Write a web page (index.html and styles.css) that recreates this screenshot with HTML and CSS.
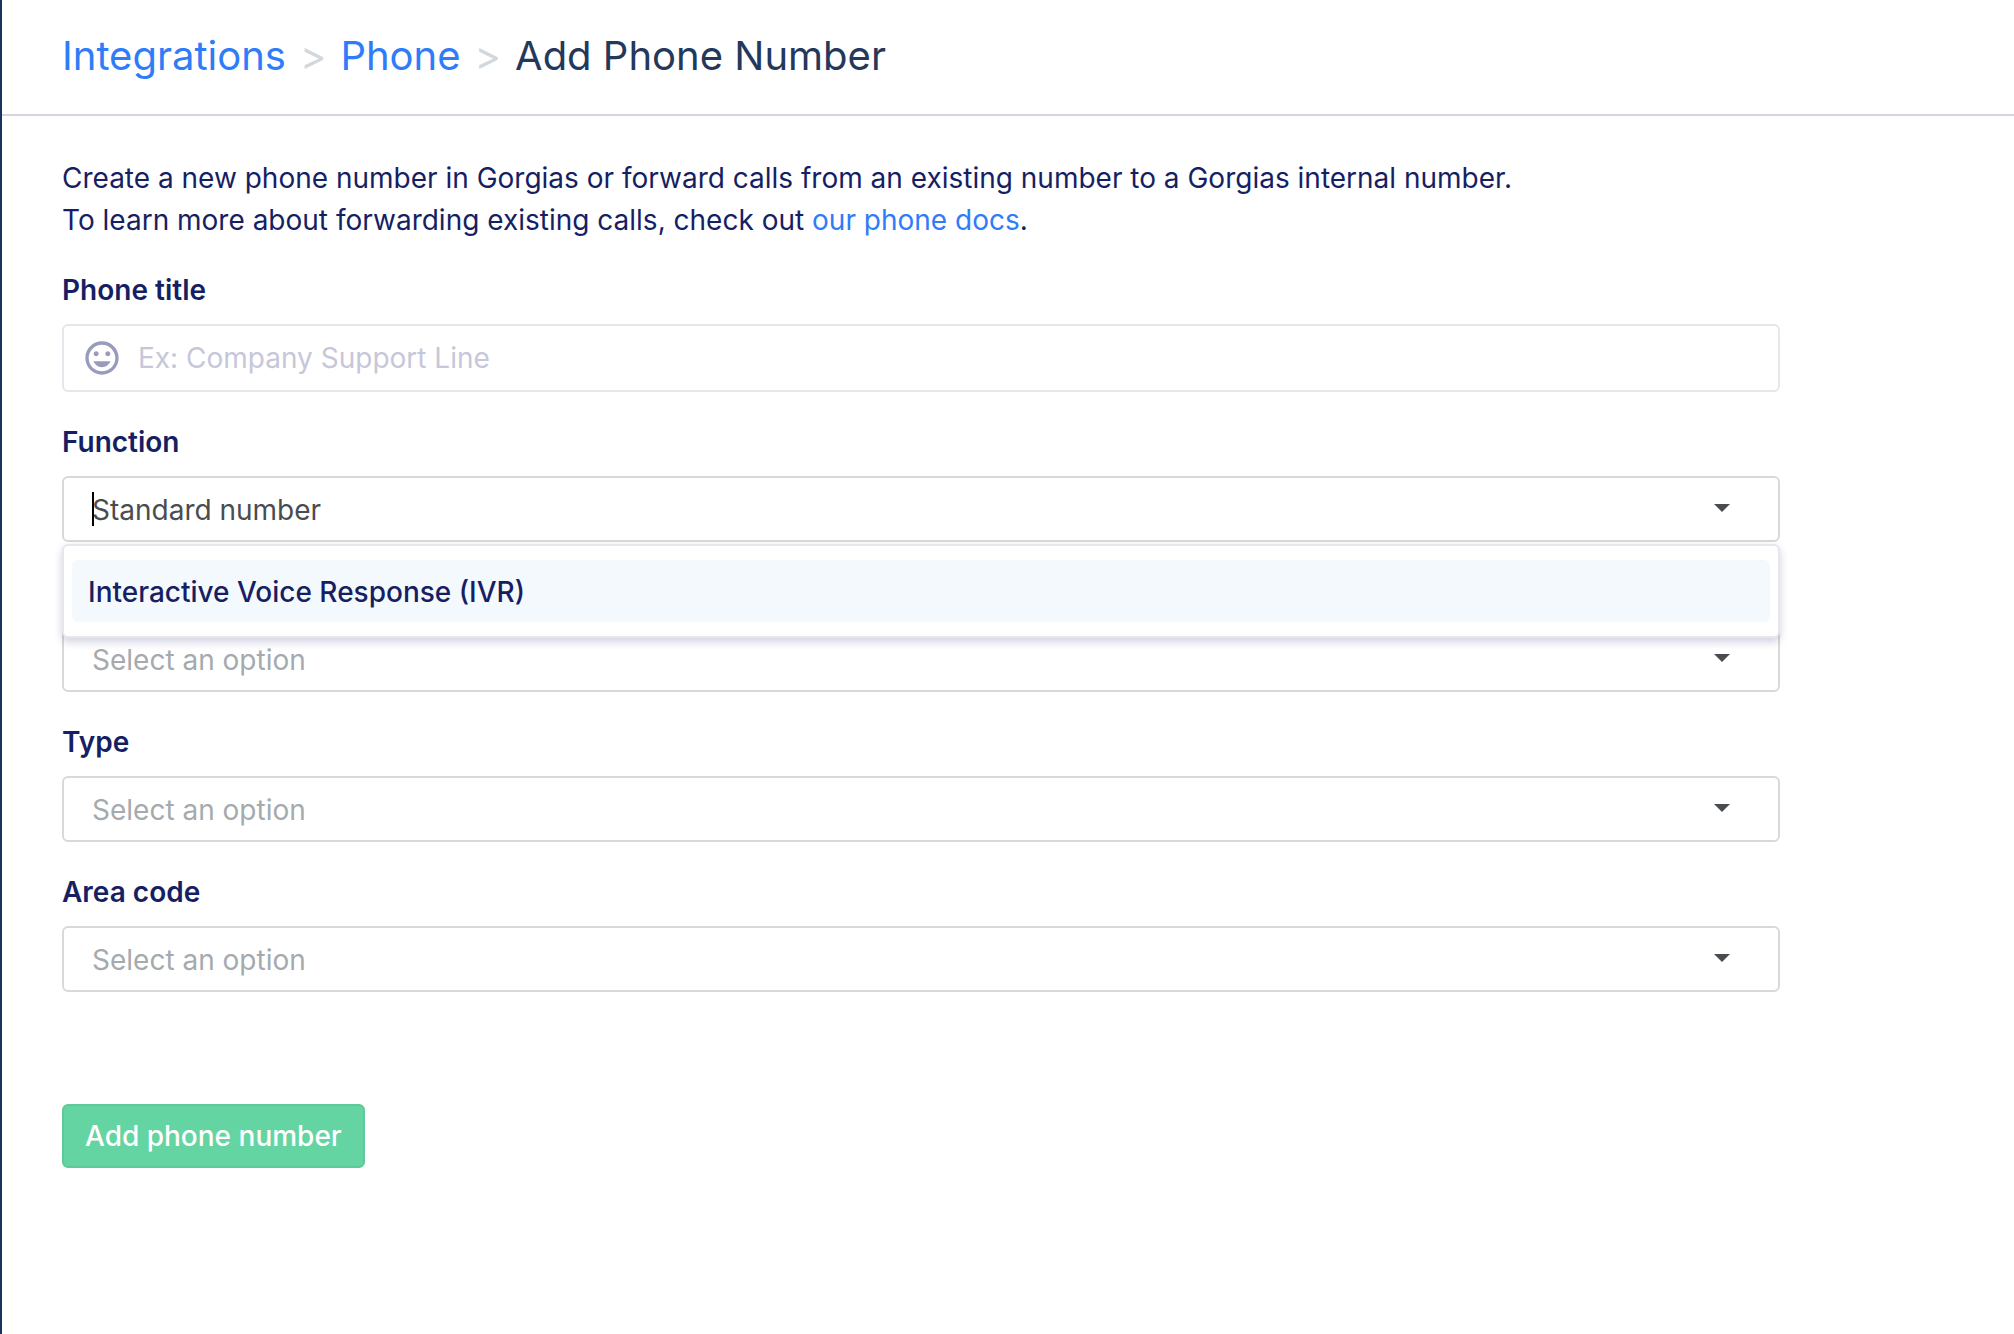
FILE: index.html
```html
<!DOCTYPE html>
<html lang="en">
  <head>
    <meta charset="UTF-8" />
    <meta name="viewport" content="width=device-width, initial-scale=1.0" />
    <title>Add Phone Number</title>
    <link rel="stylesheet" href="styles.css">
  </head>
  <body>
    <header class="page-header">
      <nav class="breadcrumb" aria-label="Breadcrumb">
        <a href="#">Integrations</a>
        <span class="separator">&gt;</span>
        <a href="#">Phone</a>
        <span class="separator">&gt;</span>
        <h1>Add Phone Number</h1>
      </nav>
    </header>

    <main class="container">
      <p>
        Create a new phone number in Gorgias or forward calls from an existing number to a Gorgias internal number.<br />
        To learn more about forwarding existing calls, check out <a href="#">our phone docs</a>.
      </p>

      <form>
        <div class="field">
          <label for="title">Phone title</label>
          <div class="input-group">
            <svg class="emoji" viewBox="0 0 24 24" aria-hidden="true">
              <path d="M11.99 2C6.47 2 2 6.48 2 12s4.47 10 9.99 10C17.52 22 22 17.52 22 12S17.52 2 11.99 2zM12 20c-4.42 0-8-3.58-8-8s3.58-8 8-8 8 3.58 8 8-3.58 8-8 8zm3.5-9c.83 0 1.5-.67 1.5-1.5S16.33 8 15.5 8 14 8.67 14 9.5s.67 1.5 1.5 1.5zm-7 0c.83 0 1.5-.67 1.5-1.5S9.33 8 8.5 8 7 8.67 7 9.5 7.67 11 8.5 11zm3.5 6.5c2.33 0 4.31-1.46 5.11-3.5H6.89c.8 2.04 2.78 3.5 5.11 3.5z" />
            </svg>
            <input type="text" id="title" placeholder="Ex: Company Support Line" />
          </div>
        </div>

        <div class="field">
          <label for="function">Function</label>
          <div class="select">
            <select id="function" class="selected">
              <option>Standard number</option>
              <option>Interactive Voice Response (IVR)</option>
            </select>
            <span class="caret"></span>
            <div class="menu">
              <button type="button" class="menu-item">Interactive Voice Response (IVR)</button>
            </div>
          </div>
        </div>

        <div class="field no-label">
          <div class="select">
            <select id="country" aria-label="Country">
              <option>Select an option</option>
            </select>
          </div>
        </div>

        <div class="field">
          <label for="type">Type</label>
          <div class="select">
            <select id="type">
              <option>Select an option</option>
            </select>
          </div>
        </div>

        <div class="field">
          <label for="area">Area code</label>
          <div class="select">
            <select id="area">
              <option>Select an option</option>
            </select>
          </div>
        </div>

        <button type="submit" class="submit">Add phone number</button>
      </form>
    </main>
  </body>
</html>
```
FILE: styles.css
```css
* {
  box-sizing: border-box;
}

body {
  margin: 0;
  min-height: 100vh;
  border-left: 2px solid #1b3260;
  background-color: #fff;
  color: #161f63;
  font-family: Inter, "Liberation Sans", sans-serif;
  font-size: 28px;
  line-height: 42px;
}

a {
  color: #2f7cf8;
  text-decoration: none;
}

input,
select,
button {
  font: inherit;
}

.page-header {
  padding: 26px 60px 28px;
  border-bottom: 2px solid #d2d7de;
}

.breadcrumb {
  display: flex;
  align-items: center;
  gap: 14px;
  font-size: 40px;
  line-height: 60px;
}

.breadcrumb h1 {
  margin: 0;
  color: #24385b;
  font-size: 40px;
  font-weight: 400;
}

.separator {
  color: #d2d7de;
}

.container {
  padding: 41px 60px;
}

p {
  margin: 0 0 28px;
}

form {
  max-width: 1718px;
}

.field {
  margin-bottom: 29px;
}

.no-label {
  padding-top: 55px;
}

label {
  display: block;
  margin-bottom: 13px;
  font-weight: 600;
}

.input-group {
  display: flex;
  align-items: center;
  gap: 16px;
  height: 68px;
  padding: 0 18px;
  border: 2px solid #e6e6ed;
  border-radius: 6px;
}

.input-group input {
  flex: 1;
  padding: 0;
  border: none;
  outline: none;
  background: none;
  color: #161f63;
}

.input-group input::placeholder {
  color: #c6c7d9;
}

.emoji {
  width: 40px;
  height: 40px;
  fill: #999bbc;
}

.select {
  position: relative;
}

.select select {
  display: block;
  appearance: none;
  width: 100%;
  height: 66px;
  padding: 2px 28px 0;
  border: 2px solid #d9d9d9;
  border-radius: 6px;
  background-color: #fff;
  color: #a5aaae;
}

.select select.selected {
  color: #494d50;
}

/* arrow */
.select::after {
  content: "";
  position: absolute;
  top: 28px;
  right: 50px;
  border: 8px solid transparent;
  border-top-color: #494d50;
  border-bottom: none;
}

/* text cursor */
.caret {
  position: absolute;
  top: 16px;
  left: 30px;
  width: 2px;
  height: 34px;
  background-color: #000;
}

.menu {
  position: absolute;
  top: 68px;
  left: 0;
  right: 0;
  z-index: 1;
  padding: 14px 8px;
  border: 2px solid #e6e6ed;
  border-radius: 6px;
  background-color: #fff;
  box-shadow: 0 4px 8px rgba(22, 31, 99, 0.2);
}

.menu-item {
  display: block;
  width: 100%;
  padding: 11px 16px 9px;
  border: none;
  border-radius: 6px;
  background-color: #f4f9fe;
  color: #161f63;
  font-weight: 500;
  text-align: left;
}

.submit {
  margin-top: 83px;
  padding: 9px 21px;
  border: 2px solid #5fc999;
  border-radius: 6px;
  background-color: #65d4a3;
  color: #fff;
  font-weight: 500;
}
```
